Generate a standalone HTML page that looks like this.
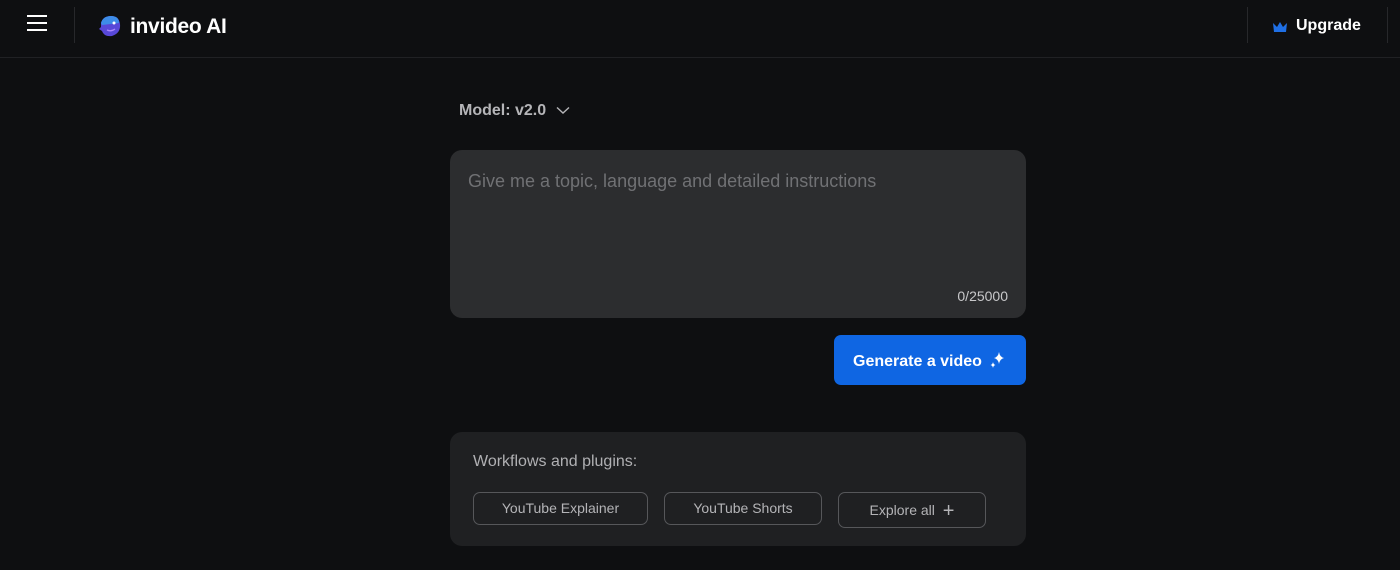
<!DOCTYPE html>
<html><head><style>
*{margin:0;padding:0;box-sizing:border-box}
body{width:1400px;height:570px;background:#0e0f11;font-family:"Liberation Sans",sans-serif;position:relative;overflow:hidden;color:#fff}
.hdr{position:absolute;left:0;top:0;width:1400px;height:58px;border-bottom:1px solid #202124}
.ham{position:absolute;left:27px;top:15px;width:20px}
.ham i{display:block;height:2px;background:#fff;margin-bottom:5px}
.vl{position:absolute;top:7px;width:1px;height:36px;background:#27282b}
.logo{position:absolute;left:130px;top:15px;font-size:21px;font-weight:bold;letter-spacing:-0.3px}
.up{position:absolute;left:1296px;top:17px;font-size:16px;font-weight:bold}
.model{position:absolute;left:459px;top:102px;font-size:16px;color:#b5b5b8;font-weight:bold}
.ta{position:absolute;left:450px;top:150px;width:576px;height:168px;background:#2c2d2f;border-radius:12px}
.ph{position:absolute;left:18px;top:21px;font-size:18px;color:#707174}
.cnt{position:absolute;right:18px;top:138px;font-size:14px;color:#c8c8ca}
.btn{position:absolute;left:834px;top:335px;width:192px;height:50px;background:#0f66e3;border-radius:7px;font-size:16px;font-weight:bold;padding:16px 0 0 19px}
.wf{position:absolute;left:450px;top:432px;width:576px;height:114px;background:#1f2022;border-radius:12px}
.wt{position:absolute;left:23px;top:21px;font-size:16px;color:#b0b0b3}
.ch{position:absolute;top:60px;height:33px;border:1px solid #56575a;border-radius:7px;font-size:14px;color:#b4b4b7;text-align:center;line-height:31px}
</style></head><body>
<div class="hdr">
<div class="ham"><i></i><i></i><i></i></div>
<div class="vl" style="left:74px"></div>
<svg style="position:absolute;left:97px;top:15px" width="25" height="22" viewBox="0 0 25 22"><path d="M4 8 Q6 1 14 1 Q22 1 23 9 Q24 18 15 21 Q7 22 5 16 L2 14 L4 12 Z" fill="#5848d8"/><path d="M4 8 Q6 1 14 1 Q22 1 22 8 L5 10Z" fill="#3d8ce8"/><circle cx="17" cy="8" r="1.5" fill="#fff"/><path d="M10 15 Q14 17 18 14" stroke="#a8f" stroke-width="1.3" fill="none"/></svg>
<div class="logo">invideo AI</div>
<div class="vl" style="left:1247px;top:7px;height:36px"></div>
<div class="vl" style="left:1387px;top:7px;height:36px"></div>
<svg style="position:absolute;left:1272px;top:21px" width="16" height="12" viewBox="0 0 16 12"><path d="M1 2 L5 6 L8 1 L11 6 L15 2 L14 11 L2 11Z" fill="#1f6fe5"/></svg>
<div class="up">Upgrade</div>
</div>
<div class="model">Model: v2.0 <svg width="14" height="9" viewBox="0 0 14 9" style="margin-left:5px"><path d="M1 1.5 L7 7 L13 1.5" stroke="#b5b5b8" stroke-width="1.4" fill="none"/></svg></div>
<div class="ta"><div class="ph">Give me a topic, language and detailed instructions</div><div class="cnt">0/25000</div></div>
<div class="btn">Generate a video <svg width="16" height="18" viewBox="0 0 16 18" style="vertical-align:-3px;margin-left:3px"><path d="M10 1 Q10.8 6 15 7 Q10.8 8 10 13 Q9.2 8 5 7 Q9.2 6 10 1Z" fill="#fff"/><path d="M4 11 Q4.4 13.6 6.5 14 Q4.4 14.4 4 17 Q3.6 14.4 1.5 14 Q3.6 13.6 4 11Z" fill="#fff"/></svg></div>
<div class="wf"><div class="wt">Workflows and plugins:</div>
<div class="ch" style="left:23px;width:175px">YouTube Explainer</div>
<div class="ch" style="left:214px;width:158px">YouTube Shorts</div>
<div class="ch" style="left:388px;width:148px;height:36px;line-height:35px">Explore all <span style="font-size:20px;vertical-align:-2px;margin-left:4px">+</span></div>
</div>
</body></html>
